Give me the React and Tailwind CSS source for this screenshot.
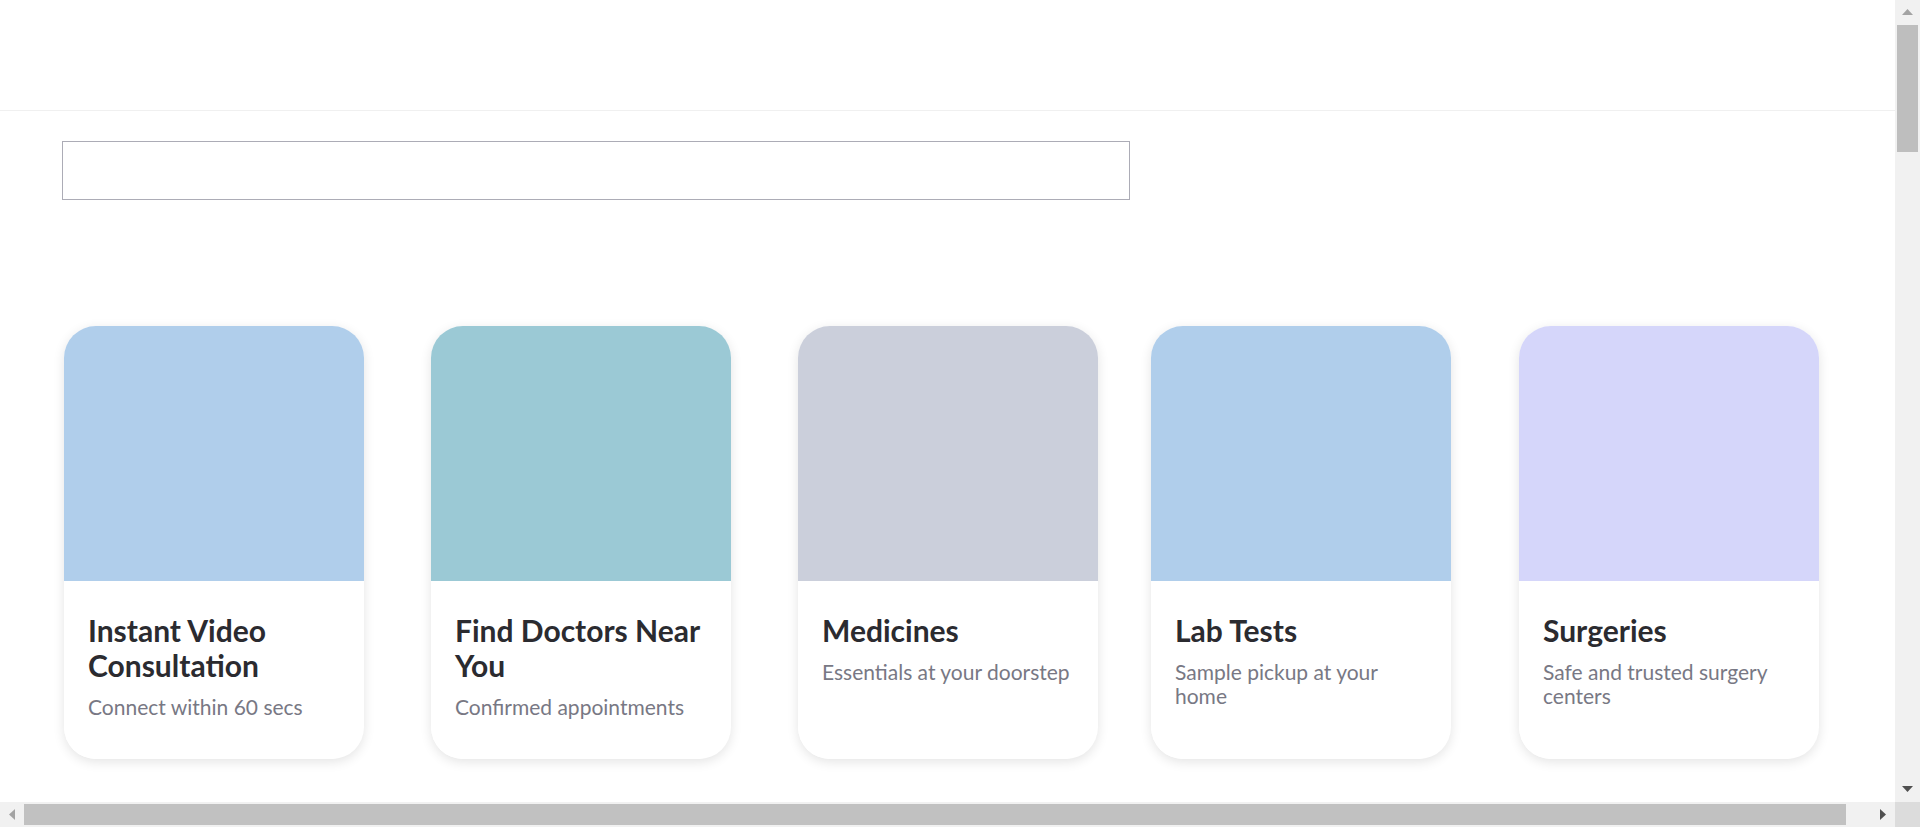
import React from "react";

const services = [
  {
    title: "Instant Video Consultation",
    subtitle: "Connect within 60 secs",
    color: "bg-[#b0ceeb]",
    offset: "ml-[2px]",
  },
  {
    title: "Find Doctors Near You",
    subtitle: "Confirmed appointments",
    color: "bg-[#9bc9d5]",
    offset: "ml-[67px]",
  },
  {
    title: "Medicines",
    subtitle: "Essentials at your doorstep",
    color: "bg-[#cbcfdb]",
    offset: "ml-[67px]",
  },
  {
    title: "Lab Tests",
    subtitle: "Sample pickup at your home",
    color: "bg-[#b0ceeb]",
    offset: "ml-[53px]",
  },
  {
    title: "Surgeries",
    subtitle: "Safe and trusted surgery centers",
    color: "bg-[#d5d6fa]",
    offset: "ml-[68px]",
  },
];

const ServiceCard = ({ title, subtitle, color, offset }) => (
  <div
    className={`${offset} flex w-[300px] shrink-0 flex-col rounded-[32px] shadow-[0_3px_12px_rgba(0,0,0,0.11)]`}
  >
    <div className={`${color} h-[255px] w-[300px] rounded-t-[32px]`}></div>
    <div className="flex w-[298px] grow flex-col rounded-b-[32px] bg-white px-6 pt-8 pb-10">
      <h2 className="text-[30px] leading-[35px] font-bold text-[#2b2b30]">
        {title}
      </h2>
      <p className="mt-3 text-[21px] leading-[24px] text-[#787884]">
        {subtitle}
      </p>
    </div>
  </div>
);

// window scrollbars as they appear in the screenshot
const Arrow = ({ points, fill }) => (
  <svg width="11" height="11" viewBox="0 0 11 11">
    <polygon points={points} fill={fill} />
  </svg>
);

const Scrollbars = () => (
  <>
    <div className="fixed top-0 right-0 flex h-[802px] w-[25px] flex-col items-center bg-[#f1f1f1]">
      <div className="flex h-[25px] items-center justify-center">
        <Arrow points="0,8 5.5,2 11,8" fill="#a3a3a3" />
      </div>
      <div className="h-[127px] w-[21px] bg-[#bebebe]"></div>
      <div className="grow"></div>
      <div className="flex h-[25px] items-center justify-center">
        <Arrow points="0,2 5.5,8 11,2" fill="#505050" />
      </div>
    </div>
    <div className="fixed bottom-0 left-0 flex h-[25px] w-[1895px] items-center bg-[#f1f1f1]">
      <div className="flex w-[24px] items-center justify-center">
        <Arrow points="8,0 2,5.5 8,11" fill="#a3a3a3" />
      </div>
      <div className="h-[21px] w-[1822px] bg-[#c1c1c1]"></div>
      <div className="flex grow items-center justify-end pr-[7px]">
        <Arrow points="3,0 9,5.5 3,11" fill="#505050" />
      </div>
    </div>
    <div className="fixed right-0 bottom-0 h-[25px] w-[25px] bg-[#dcdcdc]"></div>
  </>
);

export default function App() {
  return (
    <div className="min-h-screen bg-white font-['Lato','Noto_Sans',sans-serif]">
      <header className="h-[111px] border-b border-[#f0f0f0] bg-white"></header>

      <div className="pt-[30px] pl-[62px]">
        <input
          type="text"
          className="h-[59px] w-[1068px] border border-[#acacb6] bg-white px-4 text-[18px] outline-none"
        />
      </div>

      <div className="mt-[126px] flex items-stretch pl-[62px]">
        {services.map((s) => (
          <ServiceCard key={s.title} {...s} />
        ))}
      </div>

      <Scrollbars />
    </div>
  );
}
